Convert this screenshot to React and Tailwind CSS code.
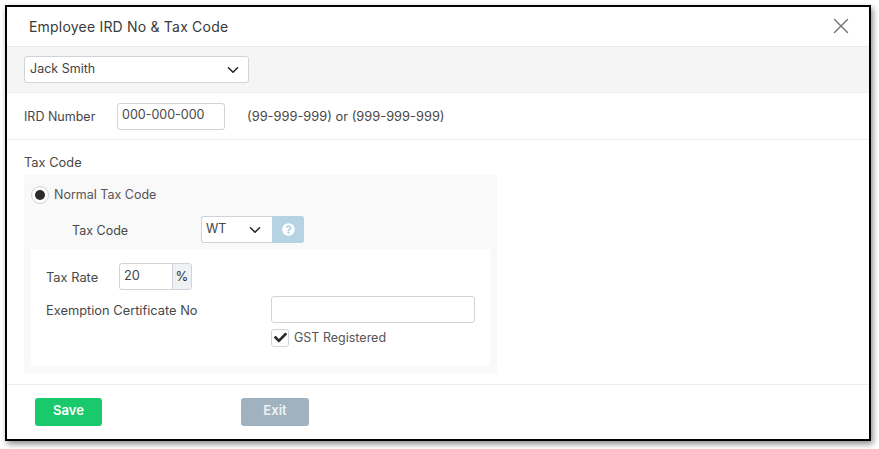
import { ChevronDown, X } from 'lucide-react'
import { FaCheck, FaQuestionCircle } from 'react-icons/fa'

function Select({ value, className }) {
  return (
    <div className={`flex items-center justify-between bg-white border border-[#ced4da] rounded-[3px] h-[27px] ${className}`}>
      <span className="text-[12.5px] leading-none text-[#444]">{value}</span>
      <ChevronDown className="h-[18px] w-[18px] text-[#222]" strokeWidth={2} />
    </div>
  )
}

export default function App() {
  return (
    <div className="w-[879px] h-[449px] pt-[5px] pl-[5px] bg-white" style={{ fontFamily: 'Inter, sans-serif' }}>
      <div className="w-[866px] h-[436px] border-2 border-black bg-white shadow-[2px_3px_6px_rgba(0,0,0,0.45)] flex flex-col text-[12.85px] text-[#484848]">
        {/* title */}
        <div className="h-[40px] shrink-0 flex items-center justify-between pl-[22px] pr-[15px] border-b border-[#e9ecef]">
          <h1 className="text-[14px] font-normal tracking-[0.2px] text-[#3a3a3a]">Employee IRD No &amp; Tax Code</h1>
          <X className="h-[26px] w-[26px] -mt-[1px] text-[#777]" strokeWidth={1.3} />
        </div>

        {/* employee */}
        <div className="h-[46px] shrink-0 flex items-center pl-[17px] bg-[#f5f5f5] border-b border-[#e9ecef]">
          <Select value="Jack Smith" className="w-[225px] pl-[5px] pr-[6px]" />
        </div>

        {/* ird */}
        <div className="h-[47px] shrink-0 flex items-center pl-[17px] border-b border-[#e9ecef]">
          <span className="w-[93px] pt-[2px] text-[12.5px]">IRD Number</span>
          <div className="w-[108px] h-[27px] border border-[#ced4da] rounded-[3px] pl-[4px] pt-[3px] leading-[16px] text-[12.5px]">000-000-000</div>
          <span className="ml-[22px] pt-[2px]">(99-999-999) or (999-999-999)</span>
        </div>

        {/* tax code */}
        <div className="flex-1 pl-[17px] pt-[15px] border-b border-[#e9ecef]">
          <p className="leading-[16px] mb-[4px]">Tax Code</p>
          <div className="w-[473px] h-[199px] bg-[#f9f9f9] px-[7px] pt-[8px]">
            <label className="flex items-center h-[24px]">
              <span className="w-[18px] h-[18px] rounded-full border border-[#ced4da] bg-white flex items-center justify-center">
                <span className="w-[10px] h-[10px] rounded-full bg-[#2b2b2b]" />
              </span>
              <span className="ml-[5px] text-[12.5px] text-[#555]">Normal Tax Code</span>
            </label>
            <div className="flex items-center h-[27px] mt-[9px] pl-[41px]">
              <span className="w-[129px] pt-[4px] text-[12.5px]">Tax Code</span>
              <Select value="WT" className="w-[71px] pl-[4px] pr-[8px] rounded-r-none border-r-0" />
              <div className="w-[32px] h-[27px] bg-[#b5d3e2] rounded-r-[3px] flex items-center justify-center">
                <FaQuestionCircle className="text-white text-[13px] -mt-[1px]" />
              </div>
            </div>
            <div className="h-[117px] mt-[6px] bg-white pl-[15px] pt-[14px]">
              <div className="flex items-center h-[27px]">
                <span className="w-[73px] pt-[2px]">Tax Rate</span>
                <div className="flex h-[27px] w-[73px] border border-[#ced4da] rounded-[3px] overflow-hidden">
                  <span className="flex-1 pl-[4px] pt-[4px] leading-[16px]">20</span>
                  <span className="w-[19px] bg-[#f0f1f5] border-l border-[#ced4da] text-[13px] text-[#333] flex items-center justify-center">%</span>
                </div>
              </div>
              <div className="flex mt-[6px]">
                <span className="w-[225px] pt-[7px] leading-[16px]">Exemption Certificate No</span>
                <div>
                  <div className="w-[204px] h-[27px] border border-[#ced4da] rounded-[3px]" />
                  <label className="flex items-center mt-[5px]">
                    <span className="w-[18px] h-[18px] border border-[#ced4da] rounded-[3px] flex items-center justify-center">
                      <FaCheck className="text-[13px] text-[#2b2b2b]" />
                    </span>
                    <span className="ml-[5px] pt-[1px] text-[12.5px] text-[#555]">GST Registered</span>
                  </label>
                </div>
              </div>
            </div>
          </div>
        </div>

        {/* footer */}
        <div className="h-[54px] shrink-0 flex items-start pt-[13px] pl-[28px]">
          <button className="w-[67px] h-[28px] pb-[2px] rounded-[3px] bg-[#19c96b] text-white text-[13px] font-semibold">Save</button>
          <button className="w-[68px] h-[28px] pb-[2px] ml-[139px] rounded-[3px] bg-[#a0b2bf] text-[#eef2f5] text-[13px] font-semibold">Exit</button>
        </div>
      </div>
    </div>
  )
}
